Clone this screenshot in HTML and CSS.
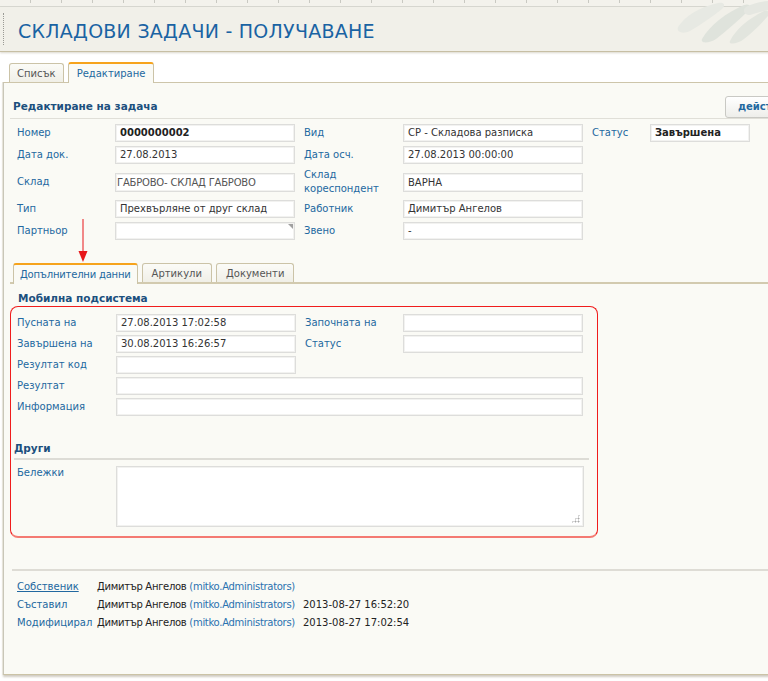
FILE: index.html
```html
<!DOCTYPE html>
<html lang="bg">
<head>
<meta charset="utf-8">
<title>Складови задачи - получаване</title>
<link rel="stylesheet" href="styles.css">
</head>
<body>
<div class="page">
  <div class="ruler"></div>
  <header class="header">
    <span class="grip"></span>
    <h1 class="title">СКЛАДОВИ ЗАДАЧИ - ПОЛУЧАВАНЕ</h1>
    <svg class="leaf" width="100" height="44" viewBox="0 0 100 44">
      <path d="M6 26 C14 14 28 6 46 2 C52 1 54 4 50 8 C40 16 28 24 18 30 C12 33 4 32 6 26 Z" fill="#e7e9e3"/>
      <path d="M30 38 C38 24 54 12 72 4 C78 2 80 6 76 10 C66 20 54 30 44 38 C38 42 28 43 30 38 Z" fill="#dfe3dc"/>
      <path d="M58 40 C64 28 76 18 92 10 C96 8 98 12 96 15 C88 24 80 32 72 38 C66 43 56 44 58 40 Z" fill="#e2e5de"/>
      <path d="M74 6 C82 2 90 0 100 0 L100 8 C92 10 84 12 78 14 C72 14 70 9 74 6 Z" fill="#e5e7e1"/>
    </svg>
  </header>

  <nav class="tabs top-tabs">
    <span class="tab">Списък</span>
    <span class="tab active">Редактиране</span>
  </nav>

  <main class="panel">
    <div class="panel-head">
      <h2 class="sect-title">Редактиране на задача</h2>
      <button class="action-btn">действия</button>
    </div>

    <div class="form-grid">
      <span class="lbl">Номер</span>
      <span class="inp bold">0000000002</span>
      <span class="lbl">Вид</span>
      <span class="inp">СР - Складова разписка</span>
      <span class="lbl">Статус</span>
      <span class="inp bold short">Завършена</span>

      <span class="lbl">Дата док.</span>
      <span class="inp">27.08.2013</span>
      <span class="lbl">Дата осч.</span>
      <span class="inp">27.08.2013 00:00:00</span>
      <span></span><span></span>

      <span class="lbl">Склад</span>
      <span class="inp tall narrow-text">ГАБРОВО- СКЛАД ГАБРОВО</span>
      <span class="lbl">Склад<br>кореспондент</span>
      <span class="inp tall">ВАРНА</span>
      <span></span><span></span>

      <span class="lbl">Тип</span>
      <span class="inp">Прехвърляне от друг склад</span>
      <span class="lbl">Работник</span>
      <span class="inp">Димитър Ангелов</span>
      <span></span><span></span>

      <span class="lbl">Партньор</span>
      <span class="inp lookup"></span>
      <span class="lbl">Звено</span>
      <span class="inp">-</span>
      <span></span><span></span>
    </div>

    <nav class="tabs sub-tabs">
      <span class="tab active">Допълнителни данни</span>
      <span class="tab">Артикули</span>
      <span class="tab">Документи</span>
    </nav>

    <h3 class="sub-title">Мобилна подсистема</h3>

    <section class="hl-box">
      <div class="box-grid">
        <span class="lbl">Пусната на</span>
        <span class="inp">27.08.2013 17:02:58</span>
        <span class="lbl">Започната на</span>
        <span class="inp"></span>

        <span class="lbl">Завършена на</span>
        <span class="inp">30.08.2013 16:26:57</span>
        <span class="lbl">Статус</span>
        <span class="inp"></span>

        <span class="lbl">Резултат код</span>
        <span class="inp"></span>
        <span></span><span></span>

        <span class="lbl">Резултат</span>
        <span class="inp wide"></span>

        <span class="lbl">Информация</span>
        <span class="inp wide"></span>
      </div>

      <h3 class="sub-title other">Други</h3>

      <div class="notes-row">
        <span class="lbl">Бележки</span>
        <div class="textarea"><span class="grip-dots"></span></div>
      </div>
    </section>

    <footer class="audit">
      <span class="audit-lbl link">Собственик</span>
      <span class="who">Димитър Ангелов <span class="acc">(mitko.Administrators)</span></span>
      <span class="when"></span>

      <span class="audit-lbl">Съставил</span>
      <span class="who">Димитър Ангелов <span class="acc">(mitko.Administrators)</span></span>
      <span class="when">2013-08-27 16:52:20</span>

      <span class="audit-lbl">Модифицирал</span>
      <span class="who">Димитър Ангелов <span class="acc">(mitko.Administrators)</span></span>
      <span class="when">2013-08-27 17:02:54</span>
    </footer>
  </main>

  <div class="arrow">
    <svg width="12" height="44" viewBox="0 0 12 44">
      <line x1="6" y1="0" x2="6" y2="34" stroke="#e8171a" stroke-width="1"/>
      <path d="M1.5 32 L10.5 32 L6 43 Z" fill="#e8171a"/>
    </svg>
  </div>
</div>
</body>
</html>
```

FILE: styles.css
```css
html, body {
  margin: 0;
  padding: 0;
  background: #ffffff;
  overflow: hidden;
}

.page {
  position: relative;
  width: 820px;
  height: 681px;
  font-family: "DejaVu Sans", Tahoma, Verdana, sans-serif;
  font-size: 10px;
  color: #333;
}

.ruler {
  height: 6px;
  background-color: #f3f2ec;
  background-image: repeating-linear-gradient(90deg, transparent 0, transparent 30px, #c9c9c2 30px, #c9c9c2 31px);
  background-size: 100% 3px;
  background-repeat: no-repeat;
  border-bottom: 1px solid #d9d9d2;
}

.header {
  position: relative;
  height: 44px;
  background: #f1f0e9;
  border-bottom: 1px solid #c7bfa4;
  box-shadow: 0 1px 2px rgba(150, 140, 110, 0.35);
  display: flex;
  align-items: center;
}

.grip {
  width: 0;
  height: 32px;
  margin-left: 3px;
  border-left: 1px dotted #9a9a94;
}

.title {
  margin: 4px 0 0 14px;
  font-family: "DejaVu Sans", Tahoma, sans-serif;
  font-weight: normal;
  font-size: 19px;
  letter-spacing: 0.25px;
  color: #1a63a3;
}

.leaf {
  position: absolute;
  left: 672px;
  top: -6px;
}

/* Tabs */
.tabs {
  display: flex;
  align-items: flex-end;
  gap: 4px;
}

.tab {
  display: flex;
  align-items: center;
  box-sizing: border-box;
  background: linear-gradient(#fbfbf7, #f0efe7);
  border: 1px solid #cbc3a7;
  border-bottom: none;
  border-radius: 3px 3px 0 0;
  color: #555;
  white-space: nowrap;
}

.tab.active {
  background: #fafaf5;
  border-top: 2px solid #f6a31c;
  color: #2268a0;
  position: relative;
  margin-bottom: -1px;
}

.top-tabs {
  height: 28px;
  padding-left: 9px;
  margin-top: 2px;
}

.top-tabs .tab {
  height: 19px;
  padding: 0 7px;
}

.top-tabs .tab.active {
  height: 21px;
  padding: 0 8px;
}

/* Panel */
.panel {
  margin-left: 3px;
  background: #fafaf5;
  border-top: 1px solid #cdc5aa;
  border-left: 1px solid #c9c6b8;
  border-bottom: 1px solid #cbc3a6;
  box-shadow: -1px 0 0 #e6e4da, 0 2px 2px rgba(120, 110, 80, 0.35);
  padding-left: 6px;
  height: 593px;
  box-sizing: border-box;
}

.panel-head {
  display: flex;
  align-items: center;
  height: 36px;
  box-sizing: border-box;
  border-bottom: 1px solid #e0dfd8;
}

.sect-title, .sub-title {
  margin: 0;
  font-size: 10.5px;
  font-weight: bold;
  color: #1c507e;
}

.sect-title {
  flex: 1;
  padding: 10px 0 0 3px;
}

.action-btn {
  margin: 12px 0 0 0;
  width: 95px;
  height: 22px;
  border: 1px solid #c9c9c4;
  border-radius: 3px;
  background: linear-gradient(#ffffff, #eeeeea);
  color: #2268a0;
  font-family: "DejaVu Sans", Tahoma, sans-serif;
  font-size: 10px;
  font-weight: bold;
  text-align: left;
  padding-left: 12px;
}

.lbl {
  color: #2268a0;
  line-height: 14px;
}

.inp {
  box-sizing: border-box;
  height: 18px;
  width: 180px;
  background: #fff;
  border: 1px solid #dddddb;
  box-shadow: inset 0 0 0 1px #f2f2f0;
  padding: 0 4px;
  line-height: 16px;
  color: #333;
  white-space: nowrap;
  overflow: hidden;
  position: relative;
}

.inp.bold {
  font-weight: bold;
  color: #222;
}

.inp.short {
  width: 100px;
}

.inp.tall {
  height: 19px;
  line-height: 17px;
}

.narrow-text {
  padding-left: 1px;
  letter-spacing: -0.2px;
  color: #555;
}

.inp.lookup::after {
  content: "";
  position: absolute;
  right: 1px;
  top: 1px;
  border-style: solid;
  border-width: 0 5px 5px 0;
  border-color: transparent #a0a0a0 transparent transparent;
}

.form-grid {
  display: grid;
  grid-template-columns: 98px 189px 99px 189px 58px 100px;
  row-gap: 4px;
  align-items: center;
  margin: 5px 0 0 7px;
}

/* Sub tabs */
.sub-tabs {
  margin-top: 22px;
  height: 20px;
  padding-left: 3px;
  border-bottom: 2px solid #d2caaf;
}

.sub-tabs .tab {
  height: 19px;
  padding: 0 9px;
}

.sub-tabs .tab.active {
  height: 21px;
  margin-bottom: -2px;
  padding: 0 6px;
  letter-spacing: -0.2px;
}

.sub-title {
  padding: 7px 0 0 8px;
  line-height: 14px;
  height: 15px;
}

.hl-box {
  margin-top: 0;
  width: 588px;
  box-sizing: border-box;
  border: 1px solid #f01c1c;
  border-bottom: 2px solid #f47a72;
  border-radius: 8px;
  padding: 7px 0 9px 6px;
}

.box-grid {
  display: grid;
  grid-template-columns: 99px 189px 98px 180px;
  row-gap: 3px;
  align-items: center;
}

.box-grid .inp.wide {
  grid-column: 2 / 5;
  width: 467px;
}

.sub-title.other {
  padding: 25px 0 2px 0;
  margin-left: -3px;
  margin-right: 8px;
  border-bottom: 2px solid #dddcd6;
  height: 15px;
}

.notes-row {
  display: flex;
  margin-top: 6px;
}

.notes-row .lbl {
  width: 99px;
}

.textarea {
  position: relative;
  width: 468px;
  height: 61px;
  box-sizing: border-box;
  background: #fff;
  border: 1px solid #dddddb;
  box-shadow: inset 0 0 0 1px #f2f2f0;
}

.grip-dots {
  position: absolute;
  right: 3px;
  bottom: 3px;
  width: 9px;
  height: 9px;
  background-image: radial-gradient(circle, #a9a9a9 0.9px, transparent 1.1px);
  background-size: 3px 3px;
  clip-path: polygon(100% 0, 100% 100%, 0 100%);
}

/* Audit footer */
.audit {
  display: grid;
  grid-template-columns: 80px 206px auto;
  grid-auto-rows: 18px;
  align-items: center;
  margin-top: 31px;
  margin-left: 2px;
  border-top: 2px solid #dedcd5;
  padding: 6px 0 0 5px;
  white-space: nowrap;
}

.audit-lbl {
  color: #2268a0;
}

.audit-lbl.link {
  text-decoration: underline;
}

.who {
  color: #222;
  letter-spacing: -0.3px;
}

.acc {
  color: #2a72b0;
}

.when {
  color: #222;
}

/* Annotation arrow */
.arrow {
  position: absolute;
  left: 77px;
  top: 219px;
  line-height: 0;
}
```
